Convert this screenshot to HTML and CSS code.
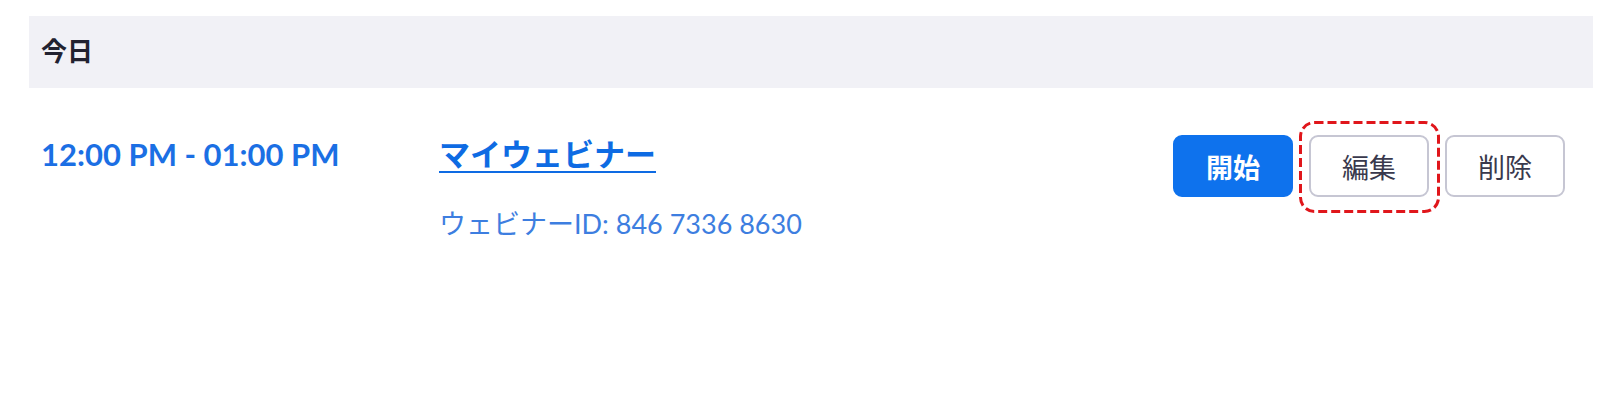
FILE: index.html
```html
<!DOCTYPE html>
<html lang="ja">
<head>
    <meta charset="UTF-8">
    <title>ウェビナー</title>
    <link rel="stylesheet" href="styles.css">
</head>
<body>
<div class="page">
    <div class="day-head">今日</div>

    <div class="item">
        <div class="time">12:00 PM - 01:00 PM</div>
        <div class="info">
            <a class="topic" href="#">マイウェビナー</a>
            <div class="webinar-id">ウェビナーID: 846 7336 8630</div>
        </div>
        <div class="actions">
            <button class="btn btn-primary">開始</button>
            <span class="mark">
                <button class="btn">編集</button>
                <svg class="mark-box" width="141" height="92" viewBox="0 0 141 92">
                    <rect x="1.5" y="1.5" width="138" height="89" rx="14" fill="none" stroke="#e0161b" stroke-width="3" stroke-dasharray="9 4"/>
                </svg>
            </span>
            <button class="btn">削除</button>
        </div>
    </div>
</div>
</body>
</html>
```

FILE: styles.css
```css
* {
    margin: 0;
    padding: 0;
    box-sizing: border-box;
}
body {
    background: #fff;
    font-family: Lato, "Noto Sans CJK JP", sans-serif;
    color: #232333;
}
.page {
    padding: 16px 17px 0 29px;
}

.day-head {
    height: 72px;
    background: #f1f1f6;
    padding: 0 0 5px 12px;
    display: flex;
    align-items: center;
    font-size: 26px;
    font-weight: 700;
    color: #222230;
}

.item {
    display: flex;
    align-items: flex-start;
    padding: 48px 28px 0 12px;
}
.time {
    width: 398px;
    font-size: 31px;
    line-height: 36px;
    font-weight: 700;
    color: #1b6fe4;
}
.info {
    flex: 1;
}
.topic {
    display: inline-block;
    font-size: 31px;
    line-height: 36px;
    font-weight: 700;
    color: #0e6be3;
    text-decoration: underline;
    text-decoration-thickness: 2px;
    text-underline-offset: 5px;
}
.webinar-id {
    margin-top: 37px;
    font-size: 27px;
    line-height: 30px;
    color: #3d7ee0;
}

.actions {
    display: flex;
    gap: 16px;
    margin-top: -1px;
}
.btn {
    height: 62px;
    min-width: 120px;
    padding: 0 30px;
    border: 2px solid #c6c6d3;
    border-radius: 9px;
    background: #fff;
    font-family: Lato, "Noto Sans CJK JP", sans-serif;
    font-size: 27px;
    font-weight: 400;
    color: #39394d;
}
.btn-primary {
    background: #0e72ed;
    border-color: #0e72ed;
    color: #fff;
    font-weight: 700;
}
.mark {
    position: relative;
    display: flex;
}
.mark-box {
    position: absolute;
    top: -14px;
    left: -10px;
}
```
